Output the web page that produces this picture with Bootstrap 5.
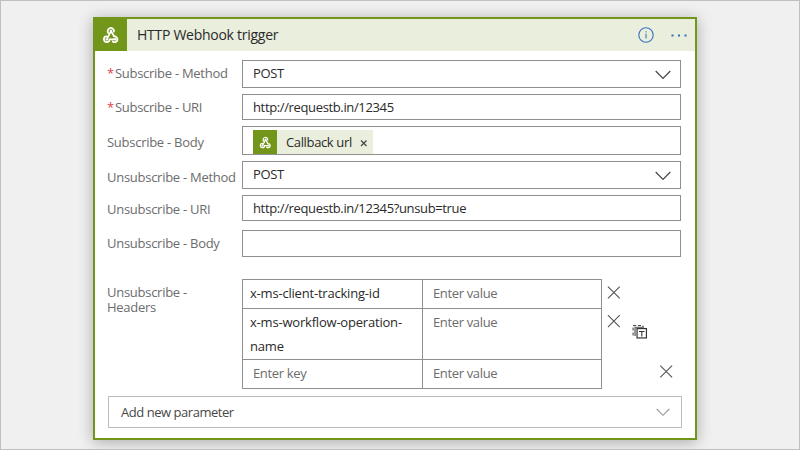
<!DOCTYPE html>
<html lang="en">
<head>
<meta charset="utf-8">
<title>HTTP Webhook trigger</title>
<link href="https://cdn.jsdelivr.net/npm/bootstrap@5.3.0/dist/css/bootstrap.min.css" rel="stylesheet">
<style>
body{width:800px;height:450px;overflow:hidden;background:#f0f0f0;border:1px solid #c0c0c0;padding:16px 0 0 92px;font:13px/18px "Open Sans","Noto Sans",sans-serif;color:#2a2a2a}
.trigger{width:604px;height:423px;border:2px solid #72961a;border-radius:0;box-shadow:0 2px 14px rgba(0,0,0,.3)}
.head{height:32px;background:#e9eedd}
.brand{width:32px;background:#72961a}
.title{font-size:14px;letter-spacing:-.27px;padding-left:10px;padding-bottom:1px;color:#2a2a2a}
.fields{padding:9px 14px 0 12px}
.line{display:flex;height:var(--h);margin-bottom:var(--g)}
.lab{width:135px;flex:none;color:#6c6c6c;white-space:nowrap;letter-spacing:-.27px}
.req{color:#e0404a;margin-right:1px}
.box{width:439px;border:1px solid #8f8f8f;padding:0 9px 0 10px;background:#fff;letter-spacing:-.36px}
.pick{padding-bottom:2px}
.pick svg{margin-top:4px}
.l1{--h:28px;--g:6px}.l2{--h:26px;--g:6px}.l3{--h:29px;--g:6px}.l4{--h:28px;--g:6px}.l5{--h:26px;--g:9px}.l6{--h:27px;--g:22px}
.l1 .lab,.l6 .lab{padding-bottom:2px}
.low{padding-top:3px}
.l5 .low{padding-top:1px}
.token{background:#e9eedd;height:24px;width:120px;margin-top:3px}
.tokicon{width:24px;height:24px;background:#72961a;margin-right:9px}
.headers{width:360px;height:110px;display:grid;grid-template-columns:179px 178px;grid-template-rows:28px 50px 28px;gap:1px;background:#8f8f8f;border:1px solid #8f8f8f}
.cellbox{background:#fff;padding:1px 7px 0;line-height:24px;color:#2a2a2a;letter-spacing:-.2px}
.cellbox.hint{color:#6c6c6c;padding-left:10px;letter-spacing:-.35px}
.tools{width:80px}
.addnew{width:574px;height:32px;border:1px solid #bcbcbc;margin:7px 0 0 1px;padding:0 11px 0 12px;color:#484848;letter-spacing:-.46px}
</style>
<script src="https://cdn.jsdelivr.net/npm/bootstrap@5.3.0/dist/js/bootstrap.bundle.min.js"></script>
</head>
<body>
<svg width="0" height="0" class="position-absolute">
<defs>
<symbol id="hook" viewBox="0 0 18 18"><g fill="none" stroke="#fff" stroke-linecap="round" stroke-width="1.7">
<path d="M6.200 7A3.200 3.200 0 1 1 12 5.600M9 5.100 5.700 11.600M9 5.100l3.100 5.200M4.600 10.300A2.900 2.900 0 1 0 7.700 13.300h5.500M11.900 10.500a2.900 2.900 0 1 1-1.200 5"/></g>
<g fill="#fff"><circle cx="9" cy="5" r="1.300"/><circle cx="4.900" cy="13.200" r="1.300"/><circle cx="13.300" cy="13.200" r="1.300"/></g></symbol>
<symbol id="x" viewBox="0 0 14 14"><path d="M1 1l12 12M13 1L1 13" fill="none" stroke="#555" stroke-width="1.1"/></symbol>
</defs>
</svg>
<div class="card trigger">
  <div class="head d-flex align-items-center">
    <div class="brand h-100 d-flex align-items-center justify-content-center"><svg width="18" height="18"><use href="#hook"/></svg></div>
    <div class="title flex-grow-1">HTTP Webhook trigger</div>
    <svg width="16" height="16" viewBox="0 0 16 16" style="margin-right:17px"><circle cx="8" cy="8" r="7.2" fill="none" stroke="#3a70c0" stroke-width="1.1"/><path d="M8 6.8v4.8M8 4.2v1.4" stroke="#5a88c8" stroke-width="1.3"/></svg>
    <svg width="16" height="3" viewBox="0 0 16 3" style="margin-right:8px"><path d="M.5.5h2v2h-2zM7 .5h2v2H7zM13.500.5h2v2h-2z" fill="#2f6cc0"/></svg>
  </div>
  <div class="fields">
    <div class="line l1 align-items-center"><div class="lab"><span class="req">*</span>Subscribe - Method</div><div class="box pick h-100 d-flex align-items-center justify-content-between"><span>POST</span><svg width="16" height="10" viewBox="0 0 16 10"><path d="M.7 1 8 8.300 15.300 1" fill="none" stroke="#444" stroke-width="1.2"/></svg></div></div>
    <div class="line l2 align-items-center"><div class="lab"><span class="req">*</span>Subscribe - URI</div><div class="box h-100 d-flex align-items-center">http://requestb.in/12345</div></div>
    <div class="line l3 align-items-center"><div class="lab low">Subscribe - Body</div><div class="box h-100"><div class="token d-flex align-items-center"><span class="tokicon d-flex align-items-center justify-content-center"><svg width="13" height="13"><use href="#hook"/></svg></span><span>Callback url</span><svg class="ms-auto me-1" width="10" height="10" viewBox="0 0 10 10"><path d="M2 3.500l5.500 5.500M7.500 3.500L2 9" stroke="#444" stroke-width="1.2"/></svg></div></div></div>
    <div class="line l4 align-items-center"><div class="lab low">Unsubscribe - Method</div><div class="box pick h-100 d-flex align-items-center justify-content-between"><span>POST</span><svg width="16" height="10" viewBox="0 0 16 10"><path d="M.7 1 8 8.300 15.300 1" fill="none" stroke="#444" stroke-width="1.2"/></svg></div></div>
    <div class="line l5 align-items-center"><div class="lab low">Unsubscribe - URI</div><div class="box h-100 d-flex align-items-center">http://requestb.in/12345?unsub=true</div></div>
    <div class="line l6 align-items-center"><div class="lab">Unsubscribe - Body</div><div class="box h-100"></div></div>
    <div class="d-flex">
      <div class="lab" style="line-height:15px;padding-top:6px">Unsubscribe -<br>Headers</div>
      <div class="headers">
        <div class="cellbox">x-ms-client-tracking-id</div><div class="cellbox hint">Enter value</div>
        <div class="cellbox">x-ms-workflow-operation-<br>name</div><div class="cellbox hint">Enter value</div>
        <div class="cellbox hint">Enter key</div><div class="cellbox hint">Enter value</div>
      </div>
      <svg class="tools" height="110" viewBox="0 0 80 110"><use href="#x" x="5" y="6" width="14" height="14"/><use href="#x" x="5" y="35" width="14" height="14"/><use href="#x" x="57" y="86" width="14" height="14" transform="translate(1 0)"/>
        <g fill="none" stroke="#333"><path d="M31.500 56.500v-10h10v3" stroke-dasharray="3 2"/><path d="M33.500 57v-8.500h9" stroke="#777" stroke-width="1.500"/><rect x="35.500" y="49.500" width="9.500" height="9.500" stroke-width="1.200" fill="#fff"/><path d="M37.500 52.500h5.500M40.300 52.500v5" stroke-width="1.100"/></g></svg>
    </div>
    <div class="addnew d-flex align-items-center justify-content-between"><span>Add new parameter</span><svg width="14" height="9" viewBox="0 0 14 9"><path d="M.7 1 7 7.300 13.300 1" fill="none" stroke="#999" stroke-width="1.100"/></svg></div>
  </div>
</div>
</body>
</html>
